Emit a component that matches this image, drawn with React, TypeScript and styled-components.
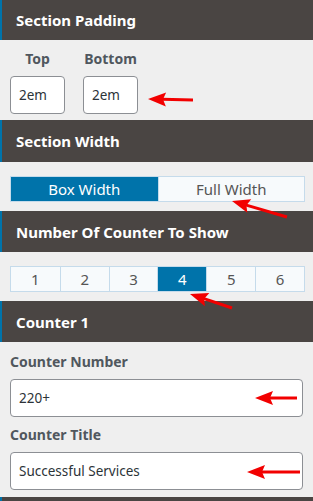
import React, { useState } from 'react'
import styled, { createGlobalStyle } from 'styled-components'

const GlobalStyle = createGlobalStyle`
  html, body {
    margin: 0;
    padding: 0;
    background: #efefef;
  }
  body {
    font-family: 'Noto Sans', 'Open Sans', sans-serif;
  }
`

const Panel = styled.div`
  position: relative;
  width: 313px;
  height: 501px;
  overflow: hidden;
  background: #efefef;
`

const SectionHeader = styled.div`
  height: 41px;
  box-sizing: border-box;
  display: flex;
  align-items: center;
  padding-left: 14px;
  background: #4a4543;
  border-left: 2px solid #0073aa;
  color: #fff;
  font-size: 15px;
  font-weight: 700;
`

const SectionBody = styled.div<{ $pad?: string }>`
  padding: ${({ $pad }) => $pad || '14px 8px 9px 10px'};
`

const PaddingRow = styled.div`
  display: flex;
  gap: 18px;
`

const PaddingField = styled.div`
  display: flex;
  flex-direction: column;
  align-items: center;
  gap: 8px;
`

const Label = styled.div`
  color: #50575e;
  font-size: 14px;
  font-weight: 700;
  line-height: 18px;
`

const Input = styled.input<{ $w?: number }>`
  box-sizing: border-box;
  width: ${({ $w }) => ($w ? `${$w}px` : '100%')};
  height: 38px;
  padding: 0 8px;
  border: 1px solid #8c8f94;
  border-radius: 4px;
  background: #fff;
  color: #2c3338;
  font-family: inherit;
  font-size: 13.5px;
  outline: none;
`

const Segmented = styled.div<{ $cols: number }>`
  display: grid;
  grid-template-columns: repeat(${({ $cols }) => $cols}, 1fr);
  width: 295px;
  height: 26px;
  border: 1px solid #c5dbeb;
  box-sizing: border-box;
  background: #f7fafc;
`

const SegButton = styled.button<{ $active?: boolean }>`
  border: none;
  border-left: 1px solid #c5dbeb;
  margin: 0;
  padding: 0;
  font-family: inherit;
  font-size: 15px;
  color: ${({ $active }) => ($active ? '#fff' : '#555')};
  background: ${({ $active }) => ($active ? '#0073aa' : 'transparent')};
  cursor: pointer;
  &:first-child {
    border-left: none;
  }
`

const FieldGroup = styled.div`
  display: flex;
  flex-direction: column;
  padding-right: 2px;
`

const FieldLabel = styled(Label)`
  margin: 9px 0 8px;
`

const Overlay = styled.svg`
  position: absolute;
  inset: 0;
  pointer-events: none;
`

type ArrowProps = { tx: number; ty: number; ex: number; ey: number }

// red pointer arrow: tip at (tx,ty), tail at (ex,ey)
const Arrow = ({ tx, ty, ex, ey }: ArrowProps) => {
  const len = Math.hypot(ex - tx, ey - ty)
  const ang = (Math.atan2(ey - ty, ex - tx) * 180) / Math.PI
  return (
    <g transform={`translate(${tx} ${ty}) rotate(${ang})`}>
      <line x1={14} y1={0} x2={len} y2={0} stroke="#f20000" strokeWidth={3} />
      <polygon points="0,0 18,-7 15,0 18,7" fill="#f20000" />
    </g>
  )
}

const App = () => {
  const [width, setWidth] = useState('box')
  const [count, setCount] = useState(4)

  return (
    <Panel>
      <GlobalStyle />
      <SectionHeader style={{ height: 40 }}>Section Padding</SectionHeader>
      <SectionBody $pad="10px 10px 6px">
        <PaddingRow>
          <PaddingField>
            <Label>Top</Label>
            <Input $w={55} defaultValue="2em" />
          </PaddingField>
          <PaddingField>
            <Label>Bottom</Label>
            <Input $w={55} defaultValue="2em" />
          </PaddingField>
        </PaddingRow>
      </SectionBody>

      <SectionHeader style={{ height: 42 }}>Section Width</SectionHeader>
      <SectionBody>
        <Segmented $cols={2}>
          <SegButton $active={width === 'box'} onClick={() => setWidth('box')}>
            Box Width
          </SegButton>
          <SegButton $active={width === 'full'} onClick={() => setWidth('full')}>
            Full Width
          </SegButton>
        </Segmented>
      </SectionBody>

      <SectionHeader>Number Of Counter To Show</SectionHeader>
      <SectionBody>
        <Segmented $cols={6}>
          {[1, 2, 3, 4, 5, 6].map((n) => (
            <SegButton key={n} $active={count === n} onClick={() => setCount(n)}>
              {n}
            </SegButton>
          ))}
        </Segmented>
      </SectionBody>

      <SectionHeader>Counter 1</SectionHeader>
      <SectionBody $pad="2px 8px 7px 10px">
        <FieldGroup>
          <FieldLabel>Counter Number</FieldLabel>
          <Input defaultValue="220+" />
          <FieldLabel>Counter Title</FieldLabel>
          <Input defaultValue="Successful Services" />
        </FieldGroup>
      </SectionBody>
      <SectionHeader />

      <Overlay width={313} height={501}>
        <Arrow tx={148} ty={99} ex={193} ey={100} />
        <Arrow tx={232} ty={201} ex={287} ey={217} />
        <Arrow tx={190} ty={294} ex={232} ey={308} />
        <Arrow tx={255} ty={398} ex={297} ey={398} />
        <Arrow tx={247} ty={472} ex={300} ey={472} />
      </Overlay>
    </Panel>
  )
}

export default App
